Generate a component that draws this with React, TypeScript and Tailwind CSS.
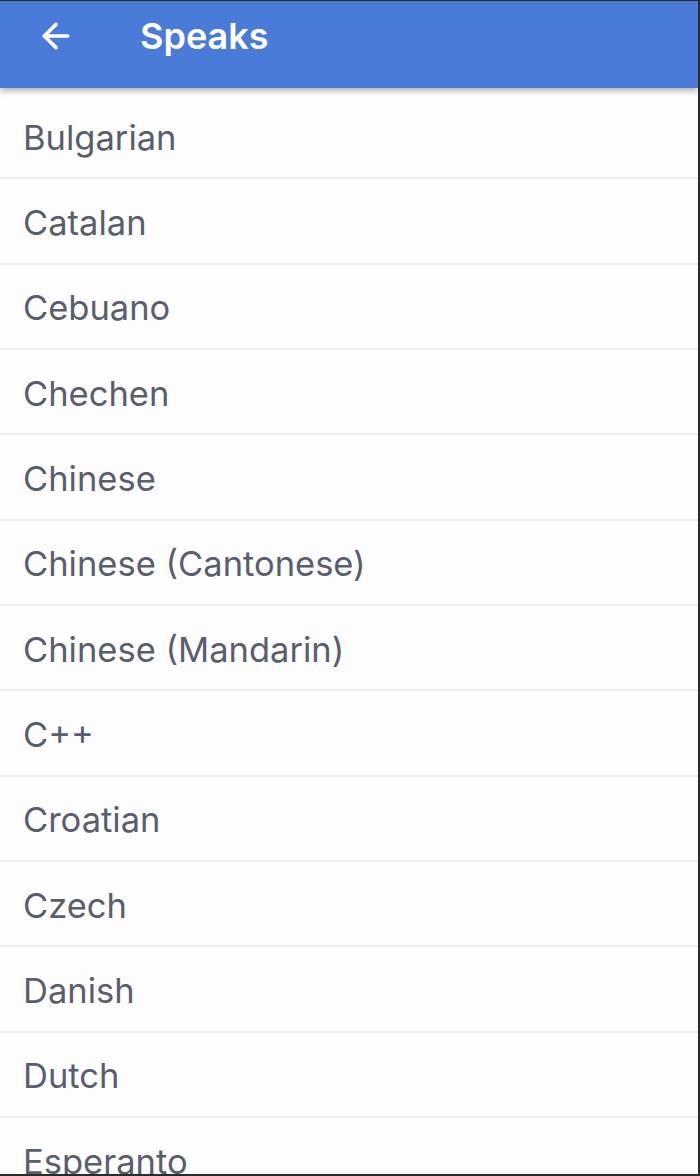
import { ArrowLeft } from 'lucide-react';

const languages = [
  'Bulgarian',
  'Catalan',
  'Cebuano',
  'Chechen',
  'Chinese',
  'Chinese (Cantonese)',
  'Chinese (Mandarin)',
  'C++',
  'Croatian',
  'Czech',
  'Danish',
  'Dutch',
  'Esperanto',
];

export default function App() {
  return (
    <div
      className="w-[700px] h-[1176px] overflow-hidden bg-[#fdfdfd] border-t border-r-2 border-b-2 border-[#2a2a2c] flex flex-col"
      style={{ fontFamily: 'Inter, Roboto, sans-serif' }}
    >
      {/* Header */}
      <div className="relative z-10 h-[87px] shrink-0 bg-[#4a7bd9] flex items-start pt-[15px] shadow-[0_3px_6px_rgba(0,0,0,0.3)]">
        <div className="w-[140px] h-[40px] pl-[36px] flex items-center">
          <ArrowLeft size={40} strokeWidth={2.2} className="text-white" />
        </div>
        <h1 className="text-white text-[36px] leading-[40px] font-semibold">Speaks</h1>
      </div>

      {/* List */}
      <div className="flex flex-col pt-[6px]">
        {languages.map((lang) => (
          <div
            key={lang}
            className="h-[85.33px] shrink-0 flex items-center pt-[4px] pl-[23px] border-b-2 border-[#ececf1] text-[34.5px] text-[#5a5e6c]"
          >
            {lang}
          </div>
        ))}
      </div>
    </div>
  );
}
